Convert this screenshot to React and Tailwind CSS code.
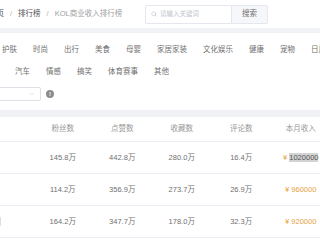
import { Search, ChevronDown } from 'lucide-react'

const categoriesTop = ['护肤', '时尚', '出行', '美食', '母婴', '家居家装', '文化娱乐', '健康', '宠物', '日用百货']
const categoriesBottom = ['汽车', '情感', '搞笑', '体育赛事', '其他']

const columns = ['粉丝数', '点赞数', '收藏数', '评论数', '本月收入']

const rows = [
  { fans: '145.8万', likes: '442.8万', saves: '280.0万', comments: '16.4万', income: '1020000', selected: true },
  { fans: '114.2万', likes: '356.9万', saves: '273.7万', comments: '26.9万', income: '960000' },
  { fans: '164.2万', likes: '347.7万', saves: '178.0万', comments: '32.3万', income: '920000', tag: true },
]

export default function App() {
  return (
    <div className="h-[240px] w-[320px] overflow-hidden bg-white font-['Liberation_Sans','Noto_Sans_CJK_SC',sans-serif] text-[7.5px] text-[#707070]">
      {/* header */}
      <div className="flex h-[28px] items-center">
        <div className="flex w-[145px] shrink-0 items-center whitespace-nowrap">
          <span className="ml-[-11px] text-[#505050]">首页</span>
          <span className="mx-[6px] text-[#b0b0b0]">/</span>
          <span className="text-[#505050]">排行榜</span>
          <span className="mx-[6px] text-[#b0b0b0]">/</span>
          <span className="text-[#a0a0a0]">KOL商业收入排行榜</span>
        </div>
        <div className="flex h-[19px]">
          <div className="flex w-[87px] items-center gap-[3px] rounded-l-[2px] border border-[#e4e7ed] pl-[5px]">
            <Search className="h-[6px] w-[6px] text-[#c0c4cc]" strokeWidth={2.5} />
            <span className="text-[6.5px] text-[#c0c4cc]">请输入关键词</span>
          </div>
          <div className="flex w-[36px] items-center justify-center rounded-r-[2px] border border-l-0 border-[#e4e7ed] bg-[#f5f7fa] text-[#707070]">
            搜索
          </div>
        </div>
      </div>
      <div className="h-[5px] bg-[#f0f2f5]" />

      {/* categories */}
      <div className="flex flex-col gap-[10px] pt-[11px] leading-[12px]">
        <div className="ml-[2px] flex gap-[16px] whitespace-nowrap">
          {categoriesTop.map((c) => (
            <span key={c}>{c}</span>
          ))}
        </div>
        <div className="ml-[15px] flex gap-[16px] whitespace-nowrap">
          {categoriesBottom.map((c) => (
            <span key={c}>{c}</span>
          ))}
        </div>
      </div>

      {/* filter */}
      <div className="mt-[9px] flex items-center">
        <div className="flex h-[14px] w-[41px] items-center justify-end rounded-r-[2px] border border-l-0 border-[#dcdfe6] pr-[5px]">
          <ChevronDown className="h-[6px] w-[6px] text-[#c0c4cc]" strokeWidth={2} />
        </div>
        <div className="ml-[5px] flex h-[8px] w-[8px] items-center justify-center rounded-full bg-[#8c8c8c] text-[6px] font-bold leading-none text-white">
          !
        </div>
      </div>

      <div className="mt-[9px] h-[7px] bg-[#f0f2f5]" />

      {/* table */}
      <div className="flex h-[25px] items-center border-b border-[#ebeef5] text-[#999]">
        <div className="w-[33px] shrink-0" />
        {columns.map((c) => (
          <div key={c} className="w-[59.5px] shrink-0 text-center">
            {c}
          </div>
        ))}
      </div>
      {rows.map((r) => (
        <div key={r.income} className="flex h-[32px] items-center border-b border-[#ebeef5]">
          <div className="flex w-[33px] shrink-0 items-center">
            {r.tag && <div className="ml-[-5px] h-[11px] w-[6px] rounded-r-[2px] border border-[#dcdfe6]" />}
          </div>
          <div className="w-[59.5px] shrink-0 text-center">{r.fans}</div>
          <div className="w-[59.5px] shrink-0 text-center">{r.likes}</div>
          <div className="w-[59.5px] shrink-0 text-center">{r.saves}</div>
          <div className="w-[59.5px] shrink-0 text-center">{r.comments}</div>
          <div className="w-[59.5px] shrink-0 whitespace-nowrap text-center text-[#e6a23c]">
            ¥{' '}
            {r.selected ? (
              <span className="bg-[#d3d3d3] text-[#555]">{r.income}</span>
            ) : (
              r.income
            )}
          </div>
        </div>
      ))}
    </div>
  )
}
